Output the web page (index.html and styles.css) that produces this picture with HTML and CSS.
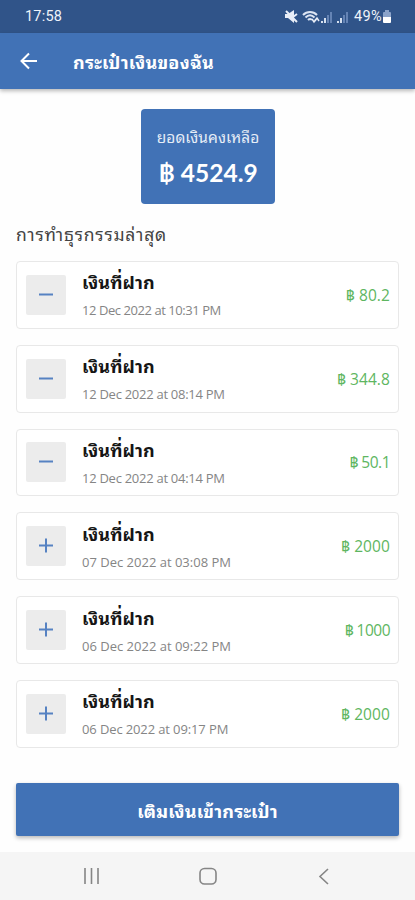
FILE: index.html
```html
<!DOCTYPE html>
<html lang="th">
<head>
<meta charset="utf-8">
<meta name="viewport" content="width=device-width, initial-scale=1">
<title>กระเป๋าเงินของฉัน</title>
<link rel="stylesheet" href="styles.css">
</head>
<body>
<div class="status">
  <span class="clock">17:58</span>
  <div class="indicators">
    <svg class="signals" width="70" height="16" viewBox="0 0 70 16">
      <path d="M0 5h3l6-4v13L3 9H0z" fill="#e8eef8"/>
      <path d="M1 2l11 11M8 8l4-3" stroke="#e8eef8" stroke-width="2" fill="none"/>
      <path d="M18 6c4-4 10-4 14 0M20.500 8.500c3-3 6-3 9 0M23 11c1.500-1.500 3-1.500 4 0" stroke="#dce5f3" stroke-width="2" fill="none"/>
      <path d="M27 10l2 3 2-3M30 12l2-3 2 3" stroke="#e8eef8" stroke-width="1.500" fill="none"/>
      <path d="M36 12h2v2h-2zM39 9h2v5h-2zM52 12h2v2h-2zM55 9h2v5h-2z" fill="#d5e0ef"/>
      <path d="M42 6h2v8h-2zM45 3h2v11h-2zM58 6h2v8h-2zM61 3h2v11h-2z" fill="#6584b5"/>
    </svg>
    <span class="percent">49%</span>
    <svg width="10" height="14" viewBox="0 0 10 14">
      <path d="M3 0h4v2h1q1 0 1 1v4H1V3q0-1 1-1h1z" fill="#8ba3ca"/>
      <path d="M1 7h8v5q0 1-1 1H2q-1 0-1-1z" fill="#fff"/>
    </svg>
  </div>
</div>
<header class="appbar">
  <svg width="18" height="18" viewBox="0 0 18 18"><path d="M17 9H2M9 1.500L1.500 9 9 16.500" fill="none" stroke="#fff" stroke-width="2"/></svg>
  <h1 class="title">กระเป๋าเงินของฉัน</h1>
</header>
<main class="content">
  <section class="balance">
    <div class="balance-label">ยอดเงินคงเหลือ</div>
    <div class="balance-value">฿ 4524.9</div>
  </section>
  <h2 class="heading">การทำธุรกรรมล่าสุด</h2>
  <div class="list">
    <article class="row">
      <div class="sign"><svg width="16" height="16" viewBox="0 0 16 16"><path d="M1 7.500h14"/></svg></div>
      <div class="info"><div class="name">เงินที่ฝาก</div><div class="date tighter">12 Dec 2022 at 10:31 PM</div></div>
      <div class="amount">฿ 80.2</div>
    </article>
    <article class="row">
      <div class="sign"><svg width="16" height="16" viewBox="0 0 16 16"><path d="M1 7.500h14"/></svg></div>
      <div class="info"><div class="name">เงินที่ฝาก</div><div class="date tight">12 Dec 2022 at 08:14 PM</div></div>
      <div class="amount">฿ 344.8</div>
    </article>
    <article class="row">
      <div class="sign"><svg width="16" height="16" viewBox="0 0 16 16"><path d="M1 7.500h14"/></svg></div>
      <div class="info"><div class="name">เงินที่ฝาก</div><div class="date tight">12 Dec 2022 at 04:14 PM</div></div>
      <div class="amount amount-narrow">฿ 50.1</div>
    </article>
    <article class="row">
      <div class="sign"><svg width="16" height="16" viewBox="0 0 16 16"><path d="M1 7.500h14M8 .5v14"/></svg></div>
      <div class="info"><div class="name">เงินที่ฝาก</div><div class="date">07 Dec 2022 at 03:08 PM</div></div>
      <div class="amount">฿ 2000</div>
    </article>
    <article class="row">
      <div class="sign"><svg width="16" height="16" viewBox="0 0 16 16"><path d="M1 7.500h14M8 .5v14"/></svg></div>
      <div class="info"><div class="name">เงินที่ฝาก</div><div class="date">06 Dec 2022 at 09:22 PM</div></div>
      <div class="amount amount-narrow">฿ 1000</div>
    </article>
    <article class="row">
      <div class="sign"><svg width="16" height="16" viewBox="0 0 16 16"><path d="M1 7.500h14M8 .5v14"/></svg></div>
      <div class="info"><div class="name">เงินที่ฝาก</div><div class="date snug">06 Dec 2022 at 09:17 PM</div></div>
      <div class="amount">฿ 2000</div>
    </article>
  </div>
  <button class="topup">เติมเงินเข้ากระเป๋า</button>
</main>
<nav class="navbar">
  <svg width="18" height="18" viewBox="0 0 18 18"><path d="M2 1v16M8.500 1v16M15 1v16"/></svg>
  <svg width="18" height="18" viewBox="0 0 18 18"><rect x="1" y="1.500" width="16" height="15.500" rx="4.500"/></svg>
  <svg width="18" height="18" viewBox="0 0 18 18"><path d="M13 2L5 9.500l8 7.500"/></svg>
</nav>
</body>
</html>
```
FILE: styles.css
```css
* { box-sizing: border-box; }
body {
  margin: 0;
  height: 900px;
  display: flex;
  flex-direction: column;
  overflow: hidden;
  background: #fefefe;
  font-family: "Open Sans", "Noto Sans Thai Looped", Loma, "Noto Sans Thai", "Noto Sans", sans-serif;
}
svg { display: block; flex: none; }
.status {
  height: 33px;
  flex: none;
  display: flex;
  align-items: center;
  justify-content: space-between;
  padding: 0 23px 0 25px;
  background: #305489;
  color: #eef3fa;
  font: 14.5px/20px Roboto, sans-serif;
}
.clock { letter-spacing: 0.2px; }
.indicators { display: flex; align-items: center; }
.signals { margin-right: -1px; }
.percent { letter-spacing: 0.4px; }
.appbar {
  height: 56px;
  flex: none;
  display: flex;
  align-items: center;
  padding-left: 20px;
  background: #4172b6;
  box-shadow: 0 2px 4px rgba(0, 0, 0, 0.28);
}
.title {
  margin: 1px 0 0 35px;
  color: #fff;
  font-size: 18px;
  line-height: 28px;
  font-weight: 700;
  letter-spacing: 0.25px;
  white-space: nowrap;
}
.content {
  flex: 1;
  display: flex;
  flex-direction: column;
  padding: 20px 16px 0;
}
.balance {
  width: 134px;
  height: 95px;
  margin-left: 125px;
  padding-top: 15px;
  border-radius: 4px;
  background: #4172b6;
  color: #fff;
  text-align: center;
  white-space: nowrap;
}
.balance-label { font-size: 15.5px; line-height: 26px; color: #e6edf7; letter-spacing: 0.05px; }
.balance-value { font-size: 24.5px; line-height: 34px; margin-top: 6px; font-weight: 700; font-family: Lato, "Noto Sans Thai", sans-serif; }
.heading {
  margin: 16px 0 12px;
  color: #444;
  font-size: 17.5px;
  line-height: 29px;
  font-weight: 400;
  letter-spacing: 0.8px;
  white-space: nowrap;
}
.list { display: flex; flex-direction: column; gap: 16px; }
.row {
  height: 67.8px;
  display: flex;
  align-items: center;
  padding: 0 8px 0 9px;
  border: 1.5px solid #e8e8e8;
  border-radius: 4px;
  background: #fff;
}
.sign {
  width: 40px;
  height: 40px;
  display: flex;
  align-items: center;
  justify-content: center;
  border-radius: 2px;
  background: #ececec;
}
.sign path { stroke: #5682c2; stroke-width: 2; }
.info { flex: 1; margin-left: 16px; white-space: nowrap; }
.name { color: #151515; font-size: 18px; line-height: 26px; font-weight: 700; letter-spacing: 0.1px; }
.date { color: #858585; font-size: 13px; line-height: 20px; margin-top: 5px; }
.tight { letter-spacing: -0.27px; }
.tighter { letter-spacing: -0.44px; }
.snug { letter-spacing: -0.12px; }
.amount { color: #5eb661; font-size: 15.5px; line-height: 22px; letter-spacing: 0.1px; }
.amount-narrow { letter-spacing: -0.5px; }
.topup {
  height: 53px;
  margin: 35.5px 0 0;
  padding: 3px 0 0;
  border: 0;
  border-radius: 2px;
  background: #4172b6;
  box-shadow: 0 2px 4px rgba(0, 0, 0, 0.28);
  color: #fff;
  font: 700 18px/26px "Open Sans", "Noto Sans Thai Looped", Loma, "Noto Sans Thai", sans-serif;
  letter-spacing: 0.2px;
}
.navbar {
  height: 48px;
  flex: none;
  display: flex;
  justify-content: space-between;
  align-items: center;
  padding: 0 82px 0 83px;
  background: #f5f5f5;
}
.navbar path, .navbar rect { fill: none; stroke: #858585; stroke-width: 1.6; }
```
